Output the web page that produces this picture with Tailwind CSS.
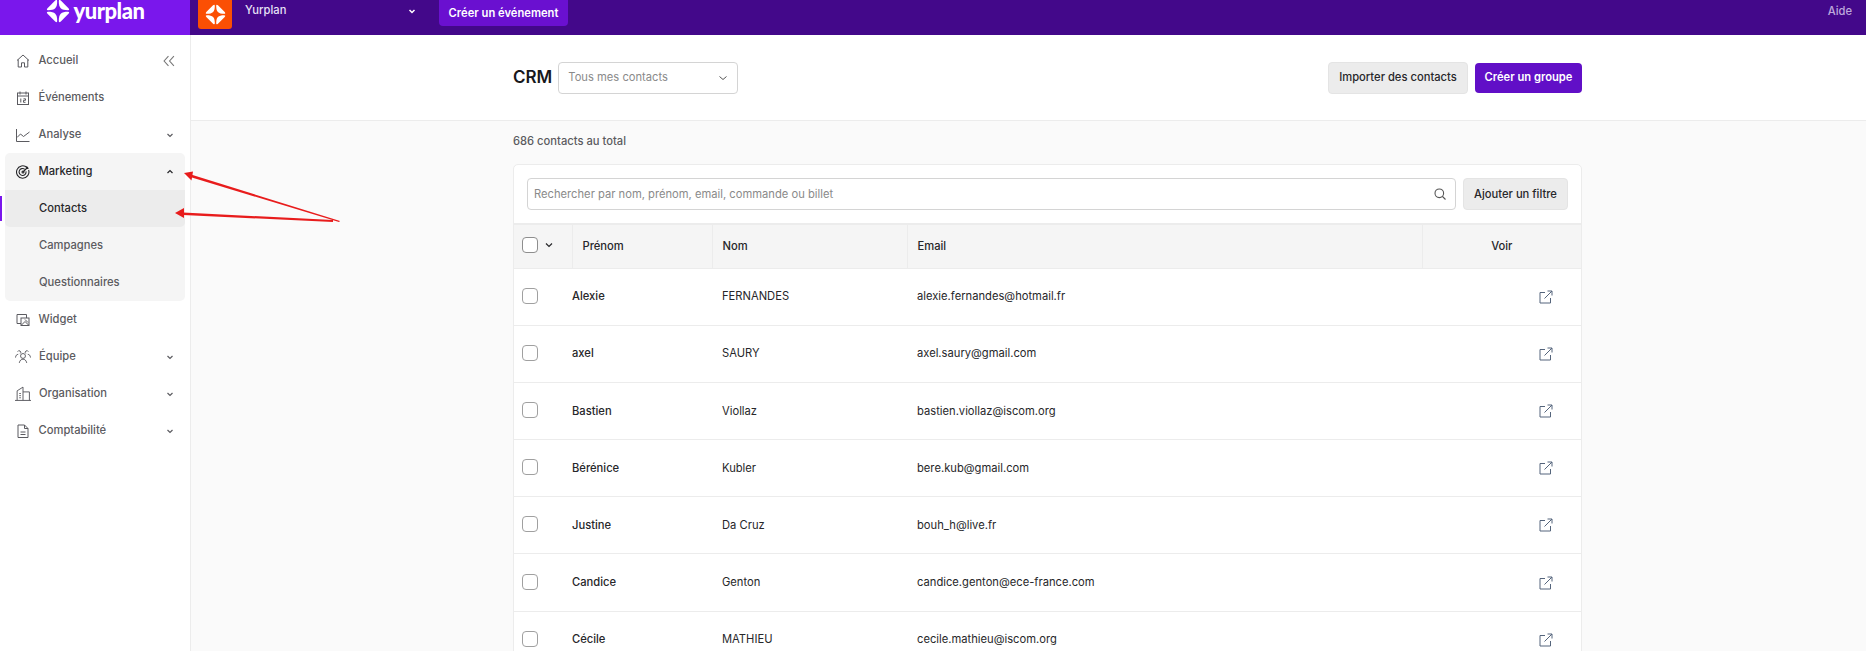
<!DOCTYPE html>
<html lang="fr">
<head>
    <meta charset="UTF-8">
    <title>CRM - Yurplan</title>
    <script src="https://cdn.jsdelivr.net/npm/@tailwindcss/browser@4"></script>
</head>
<body class="h-[651px] overflow-hidden bg-[#fafafa] font-['Inter',sans-serif] relative">
    <!-- top bar -->
    <header class="h-[35px] flex bg-[#43088a]">
        <div class="w-[190px] shrink-0 bg-[#7a17ec] flex justify-center items-start gap-[4px]">
            <svg class="w-[24px] h-[24px] -mt-[1px]" viewBox="-12 -12 24 24" fill="#fff">
                <path d="M.8-10Q.8-12 2.800-10.500L10.500-2.800Q12-.8 10-.8C3-.8 .8-3 .8-10Z"/>
                <path d="M-.8-10Q-.8-12-2.800-10.500L-10.500-2.800Q-12-.8-10-.8C-3-.8-.8-3-.8-10Z"/>
                <path d="M.8 10Q.8 12 2.800 10.500L10.500 2.800Q12 .8 10 .8C3 .8 .8 3 .8 10Z"/>
                <path d="M-.8 10Q-.8 12-2.800 10.500L-10.500 2.800Q-12 .8-10 .8C-3 .8-.8 3-.8 10Z"/>
            </svg>
            <span class="text-white font-['Lato'] font-black text-[22px] leading-[21px] tracking-[-0.5px]">yurplan</span>
        </div>
        <div class="flex-1 flex items-start pl-[8px]">
            <div class="w-[34px] h-[29px] bg-[#fb4f04] rounded-b-[3px] flex items-center justify-center">
                <svg class="w-[21px] h-[21px] -mt-[1px]" viewBox="-12 -12 24 24" fill="#fff">
                    <path d="M.8-10Q.8-12 2.800-10.500L10.500-2.800Q12-.8 10-.8C3-.8 .8-3 .8-10Z"/>
                    <path d="M-.8-10Q-.8-12-2.800-10.500L-10.500-2.800Q-12-.8-10-.8C-3-.8-.8-3-.8-10Z"/>
                    <path d="M.8 10Q.8 12 2.800 10.500L10.500 2.800Q12 .8 10 .8C3 .8 .8 3 .8 10Z"/>
                    <path d="M-.8 10Q-.8 12-2.800 10.500L-10.500 2.800Q-12 .8-10 .8C-3 .8-.8 3-.8 10Z"/>
                </svg>
            </div>
            <span class="ml-[13px] mt-[2px] w-[162px] text-[11.2px] leading-[16px] font-medium text-[#e6e0f5]">Yurplan</span>
            <svg class="w-[10px] h-[10px] mt-[6px] text-white" viewBox="0 0 10 10" fill="none" stroke="currentColor" stroke-width="1.500"><path d="M2.500 4 5 6.500 7.500 4"/></svg>
            <div class="ml-[22px] h-[26px] w-[129px] bg-[#6a10d0] rounded-b-[4px] text-white text-[11.2px] font-semibold flex items-center justify-center">Créer un événement</div>
            <span class="ml-auto mr-[14px] mt-[3px] text-[11.2px] font-medium text-[#bda8dc]">Aide</span>
        </div>
    </header>

    <div class="flex h-[616px]">
        <!-- sidebar -->
        <aside class="w-[191px] shrink-0 bg-white border-r border-[#ececec] pt-[7px] relative text-[11.2px] font-medium text-[#5b5b60]">
            <div class="absolute left-0 top-[161px] w-[2px] h-[25px] bg-[#7a17ec]"></div>
            <div class="h-[37px] pl-[16px] pr-[15px] flex items-center gap-[8.500px]">
                <svg class="w-[14px] h-[14px]" viewBox="0 0 14 14" fill="none" stroke="currentColor"><path d="M1 6.500 7 1l6 5.500M2.200 5.500V13H5.500V8.800h3V13h3.300V5.500"/></svg>
                <span class="flex-1">Accueil</span>
                <svg class="w-[12px] h-[12px]" viewBox="0 0 11 11" fill="none" stroke="#777"><path d="M5 1 1 5.500 5 10M10 1 6 5.500 10 10"/></svg>
            </div>
            <div class="h-[37px] pl-[16px] flex items-center gap-[8.500px]">
                <svg class="w-[14px] h-[14px]" viewBox="0 0 14 14" fill="none" stroke="currentColor"><rect x="1.500" y="2" width="11" height="11.500"/><path d="M1.500 5h11M4 .5v3M10 .5v3M4.800 7.500v4M7.500 7.800h2v1.500h-2v2h2"/></svg>
                <span>Événements</span>
            </div>
            <div class="h-[37px] pl-[16px] pr-[15px] flex items-center gap-[8.500px]">
                <svg class="w-[14px] h-[14px]" viewBox="0 0 14 14" fill="none" stroke="currentColor"><path d="M.5 1v12.500h13M1 9.500 4.500 6l3 2.500 6-4.500"/></svg>
                <span class="flex-1">Analyse</span>
                <svg class="w-[10px] h-[10px]" viewBox="0 0 10 10" fill="none" stroke="currentColor" stroke-width="1.200"><path d="M2.500 4 5 6.500 7.500 4"/></svg>
            </div>
            <div class="mx-[5px] rounded-[5px] bg-[#f5f5f5] overflow-hidden">
                <div class="h-[37px] pl-[11px] pr-[10px] flex items-center gap-[8.500px] text-[#27272a]">
                    <svg class="w-[14px] h-[14px]" viewBox="0 0 14 14" fill="none" stroke="currentColor" stroke-width="1.100"><path d="M11 2.500A6.200 6.200 0 1 0 12.600 5"/><path d="M8.800 4.300A3.500 3.500 0 1 0 10 6.300"/><circle cx="7" cy="7" r="1"/><path d="M7 7 12 2M10.500 1.500v2h2"/></svg>
                    <span class="flex-1">Marketing</span>
                    <svg class="w-[10px] h-[10px]" viewBox="0 0 10 10" fill="none" stroke="currentColor" stroke-width="1.200"><path d="M2.500 6 5 3.500 7.500 6"/></svg>
                </div>
                <div class="h-[37px] pl-[34px] flex items-center bg-[#ececec] rounded-b-[5px] text-[#27272a]">Contacts</div>
                <div class="h-[37px] pl-[34px] flex items-center">Campagnes</div>
                <div class="h-[37px] pl-[34px] flex items-center">Questionnaires</div>
            </div>
            <div class="h-[37px] pl-[16px] flex items-center gap-[8.500px]">
                <svg class="w-[14px] h-[14px]" viewBox="0 0 14 14" fill="none" stroke="currentColor"><path d="M5 10.500H1V1.500h9.500V5"/><rect x="5" y="5" width="8" height="7.500"/><path d="M5.500 12 9 8.500l3.500 3.500M9 6.500l3 3"/></svg>
                <span>Widget</span>
            </div>
            <div class="h-[37px] pl-[15px] pr-[15px] flex items-center gap-[8px]">
                <svg class="w-[16px] h-[15px]" viewBox="0 0 15 14" fill="none" stroke="currentColor" stroke-width=".9"><circle cx="7.500" cy="6.500" r="2.300"/><path d="M4 13c.5-2.500 2-3.500 3.500-3.500S10.500 10.500 11 13M2.500 2.500a1.500 1.500 0 1 1 2.400 1.700M.5 8c.2-2 1-3 2.500-3M12.500 2.500a1.500 1.500 0 1 0-2.400 1.700M14.500 8c-.2-2-1-3-2.500-3"/></svg>
                <span class="flex-1">Équipe</span>
                <svg class="w-[10px] h-[10px]" viewBox="0 0 10 10" fill="none" stroke="currentColor" stroke-width="1.200"><path d="M2.500 4 5 6.500 7.500 4"/></svg>
            </div>
            <div class="h-[37px] pl-[15px] pr-[15px] flex items-center gap-[8px]">
                <svg class="w-[16px] h-[15px]" viewBox="0 0 15 14" fill="none" stroke="currentColor" stroke-width=".9"><path d="M0 13.500h15M2 13.500V4.500L7.500 1v12.500M7.500 5.500h6v8M4 7h1.500M4 9h1.500M4 11h1.500"/></svg>
                <span class="flex-1">Organisation</span>
                <svg class="w-[10px] h-[10px]" viewBox="0 0 10 10" fill="none" stroke="currentColor" stroke-width="1.200"><path d="M2.500 4 5 6.500 7.500 4"/></svg>
            </div>
            <div class="h-[37px] pl-[16px] pr-[15px] flex items-center gap-[8.500px]">
                <svg class="w-[14px] h-[14px]" viewBox="0 0 14 14" fill="none" stroke="currentColor"><path d="M2 1h6.500L12 4.500v9H2ZM8.500 1v3.500H12M4.500 8h5M4.500 10.500h5"/></svg>
                <span class="flex-1">Comptabilité</span>
                <svg class="w-[10px] h-[10px]" viewBox="0 0 10 10" fill="none" stroke="currentColor" stroke-width="1.200"><path d="M2.500 4 5 6.500 7.500 4"/></svg>
            </div>
        </aside>

        <main class="flex-1 min-w-0">
            <div class="h-[86px] bg-white border-b border-[#ececec] pl-[322px] pr-[284px] flex items-center">
                <h1 class="text-[17px] font-semibold text-[#18181b]">CRM</h1>
                <div class="ml-[6px] w-[180px] h-[32px] border border-[#d4d4d4] rounded-[4px] flex items-center justify-between pl-[9px] pr-[9px] text-[11.2px] text-[#8a8a8a]">
                    Tous mes contacts
                    <svg class="w-[10px] h-[10px] text-[#555]" viewBox="0 0 10 10" fill="none" stroke="currentColor"><path d="M1.500 3.500 5 6.500 8.500 3.500"/></svg>
                </div>
                <button class="ml-auto w-[140px] h-[32px] bg-[#ececec] border border-[#e4e4e4] rounded-[4px] text-[11.2px] font-medium text-[#27272a]">Importer des contacts</button>
                <button class="ml-[7px] w-[107px] h-[30px] bg-[#610fc7] rounded-[4px] text-[11.2px] font-semibold text-white">Créer un groupe</button>
            </div>
            <div class="pl-[322px]">
                <p class="pt-[10px] h-[43px] text-[11.2px] leading-[20px] font-medium text-[#5b5b60]">686 contacts au total</p>
                <div class="w-[1069px] bg-white border border-[#ececec] rounded-t-[5px]">
                    <div class="h-[58px] pl-[13px] pr-[13px] flex items-center gap-[7px]">
                        <div class="flex-1 h-[32px] border border-[#d4d4d4] rounded-[4px] flex items-center justify-between pl-[6px] pr-[9px] text-[11.2px] text-[#8a8a8a]">
                            Rechercher par nom, prénom, email, commande ou billet
                            <svg class="w-[12px] h-[12px] text-[#555]" viewBox="0 0 12 12" fill="none" stroke="currentColor" stroke-width="1.100"><circle cx="5.300" cy="5.300" r="4.300"/><path d="m8.500 8.500 3 3"/></svg>
                        </div>
                        <button class="w-[105px] h-[32px] bg-[#ececec] border border-[#e4e4e4] rounded-[4px] text-[11.2px] font-medium text-[#27272a]">Ajouter un filtre</button>
                    </div>
                    <table class="w-full table-fixed text-[11.2px] text-[#27272a]">
                        <colgroup><col class="w-[58px]"><col class="w-[140px]"><col class="w-[195px]"><col class="w-[515px]"><col></colgroup>
                        <thead>
                            <tr class="h-[44px] bg-[#f5f5f5] border-t-2 border-b border-[#ececec] font-medium">
                                <th class="font-medium border-r border-[#ececec] pl-[8px] text-left">
                                    <div class="flex items-center gap-[6px] mb-[2px]">
                                        <span class="w-[16px] h-[16px] border border-[#8e8e8e] rounded-[4px] bg-white"></span>
                                        <svg class="w-[10px] h-[10px]" viewBox="0 0 10 10" fill="none" stroke="currentColor" stroke-width="1.200"><path d="M2 3.500 5 6.500 8 3.500"/></svg>
                                    </div>
                                </th>
                                <th class="font-medium border-r border-[#ececec] pl-[10px] text-left">Prénom</th>
                                <th class="font-medium border-r border-[#ececec] pl-[10px] text-left">Nom</th>
                                <th class="font-medium border-r border-[#ececec] pl-[10px] text-left">Email</th>
                                <th class="font-medium text-center">Voir</th>
                            </tr>
                        </thead>
                        <tbody>
                            <tr class="h-[57.200px] border-b border-[#ececec]"><td class="pl-[8px]"><span class="block mb-[2px] w-[16px] h-[16px] border border-[#a0a0a0] rounded-[4px]"></span></td><td class="font-medium">Alexie</td><td class="pl-[10px]">FERNANDES</td><td class="pl-[10px]">alexie.fernandes@hotmail.fr</td><td class="pr-[28px]"><svg class="ml-auto w-[14px] h-[14px] text-[#55657c]" viewBox="0 0 14 14" fill="none" stroke="currentColor"><path d="M6 2.500H1V13h10.500V8M5.500 8.500 13 1M8.500 1H13v4.500"/></svg></td></tr>
                            <tr class="h-[57.200px] border-b border-[#ececec]"><td class="pl-[8px]"><span class="block mb-[2px] w-[16px] h-[16px] border border-[#a0a0a0] rounded-[4px]"></span></td><td class="font-medium">axel</td><td class="pl-[10px]">SAURY</td><td class="pl-[10px]">axel.saury@gmail.com</td><td class="pr-[28px]"><svg class="ml-auto w-[14px] h-[14px] text-[#55657c]" viewBox="0 0 14 14" fill="none" stroke="currentColor"><path d="M6 2.500H1V13h10.500V8M5.500 8.500 13 1M8.500 1H13v4.500"/></svg></td></tr>
                            <tr class="h-[57.200px] border-b border-[#ececec]"><td class="pl-[8px]"><span class="block mb-[2px] w-[16px] h-[16px] border border-[#a0a0a0] rounded-[4px]"></span></td><td class="font-medium">Bastien</td><td class="pl-[10px]">Viollaz</td><td class="pl-[10px]">bastien.viollaz@iscom.org</td><td class="pr-[28px]"><svg class="ml-auto w-[14px] h-[14px] text-[#55657c]" viewBox="0 0 14 14" fill="none" stroke="currentColor"><path d="M6 2.500H1V13h10.500V8M5.500 8.500 13 1M8.500 1H13v4.500"/></svg></td></tr>
                            <tr class="h-[57.200px] border-b border-[#ececec]"><td class="pl-[8px]"><span class="block mb-[2px] w-[16px] h-[16px] border border-[#a0a0a0] rounded-[4px]"></span></td><td class="font-medium">Bérénice</td><td class="pl-[10px]">Kubler</td><td class="pl-[10px]">bere.kub@gmail.com</td><td class="pr-[28px]"><svg class="ml-auto w-[14px] h-[14px] text-[#55657c]" viewBox="0 0 14 14" fill="none" stroke="currentColor"><path d="M6 2.500H1V13h10.500V8M5.500 8.500 13 1M8.500 1H13v4.500"/></svg></td></tr>
                            <tr class="h-[57.200px] border-b border-[#ececec]"><td class="pl-[8px]"><span class="block mb-[2px] w-[16px] h-[16px] border border-[#a0a0a0] rounded-[4px]"></span></td><td class="font-medium">Justine</td><td class="pl-[10px]">Da Cruz</td><td class="pl-[10px]">bouh_h@live.fr</td><td class="pr-[28px]"><svg class="ml-auto w-[14px] h-[14px] text-[#55657c]" viewBox="0 0 14 14" fill="none" stroke="currentColor"><path d="M6 2.500H1V13h10.500V8M5.500 8.500 13 1M8.500 1H13v4.500"/></svg></td></tr>
                            <tr class="h-[57.200px] border-b border-[#ececec]"><td class="pl-[8px]"><span class="block mb-[2px] w-[16px] h-[16px] border border-[#a0a0a0] rounded-[4px]"></span></td><td class="font-medium">Candice</td><td class="pl-[10px]">Genton</td><td class="pl-[10px]">candice.genton@ece-france.com</td><td class="pr-[28px]"><svg class="ml-auto w-[14px] h-[14px] text-[#55657c]" viewBox="0 0 14 14" fill="none" stroke="currentColor"><path d="M6 2.500H1V13h10.500V8M5.500 8.500 13 1M8.500 1H13v4.500"/></svg></td></tr>
                            <tr class="h-[57.200px] border-b border-[#ececec]"><td class="pl-[8px]"><span class="block mb-[2px] w-[16px] h-[16px] border border-[#a0a0a0] rounded-[4px]"></span></td><td class="font-medium">Cécile</td><td class="pl-[10px]">MATHIEU</td><td class="pl-[10px]">cecile.mathieu@iscom.org</td><td class="pr-[28px]"><svg class="ml-auto w-[14px] h-[14px] text-[#55657c]" viewBox="0 0 14 14" fill="none" stroke="currentColor"><path d="M6 2.500H1V13h10.500V8M5.500 8.500 13 1M8.500 1H13v4.500"/></svg></td></tr>
                        </tbody>
                    </table>
                </div>
            </div>
        </main>
    </div>

    <!-- red annotation arrows -->
    <svg class="absolute left-0 top-0 pointer-events-none" width="400" height="260" fill="#e81c1c">
        <path d="M340 221 191 174.500l-.8 2.500L339 222Z"/>
        <path d="M184 173l9-1.500-1.500 9Z"/>
        <path d="M333 220 183 212.500v2.500l150 7Z"/>
        <path d="M175 213l9-5v10Z"/>
    </svg>
</body>
</html>
